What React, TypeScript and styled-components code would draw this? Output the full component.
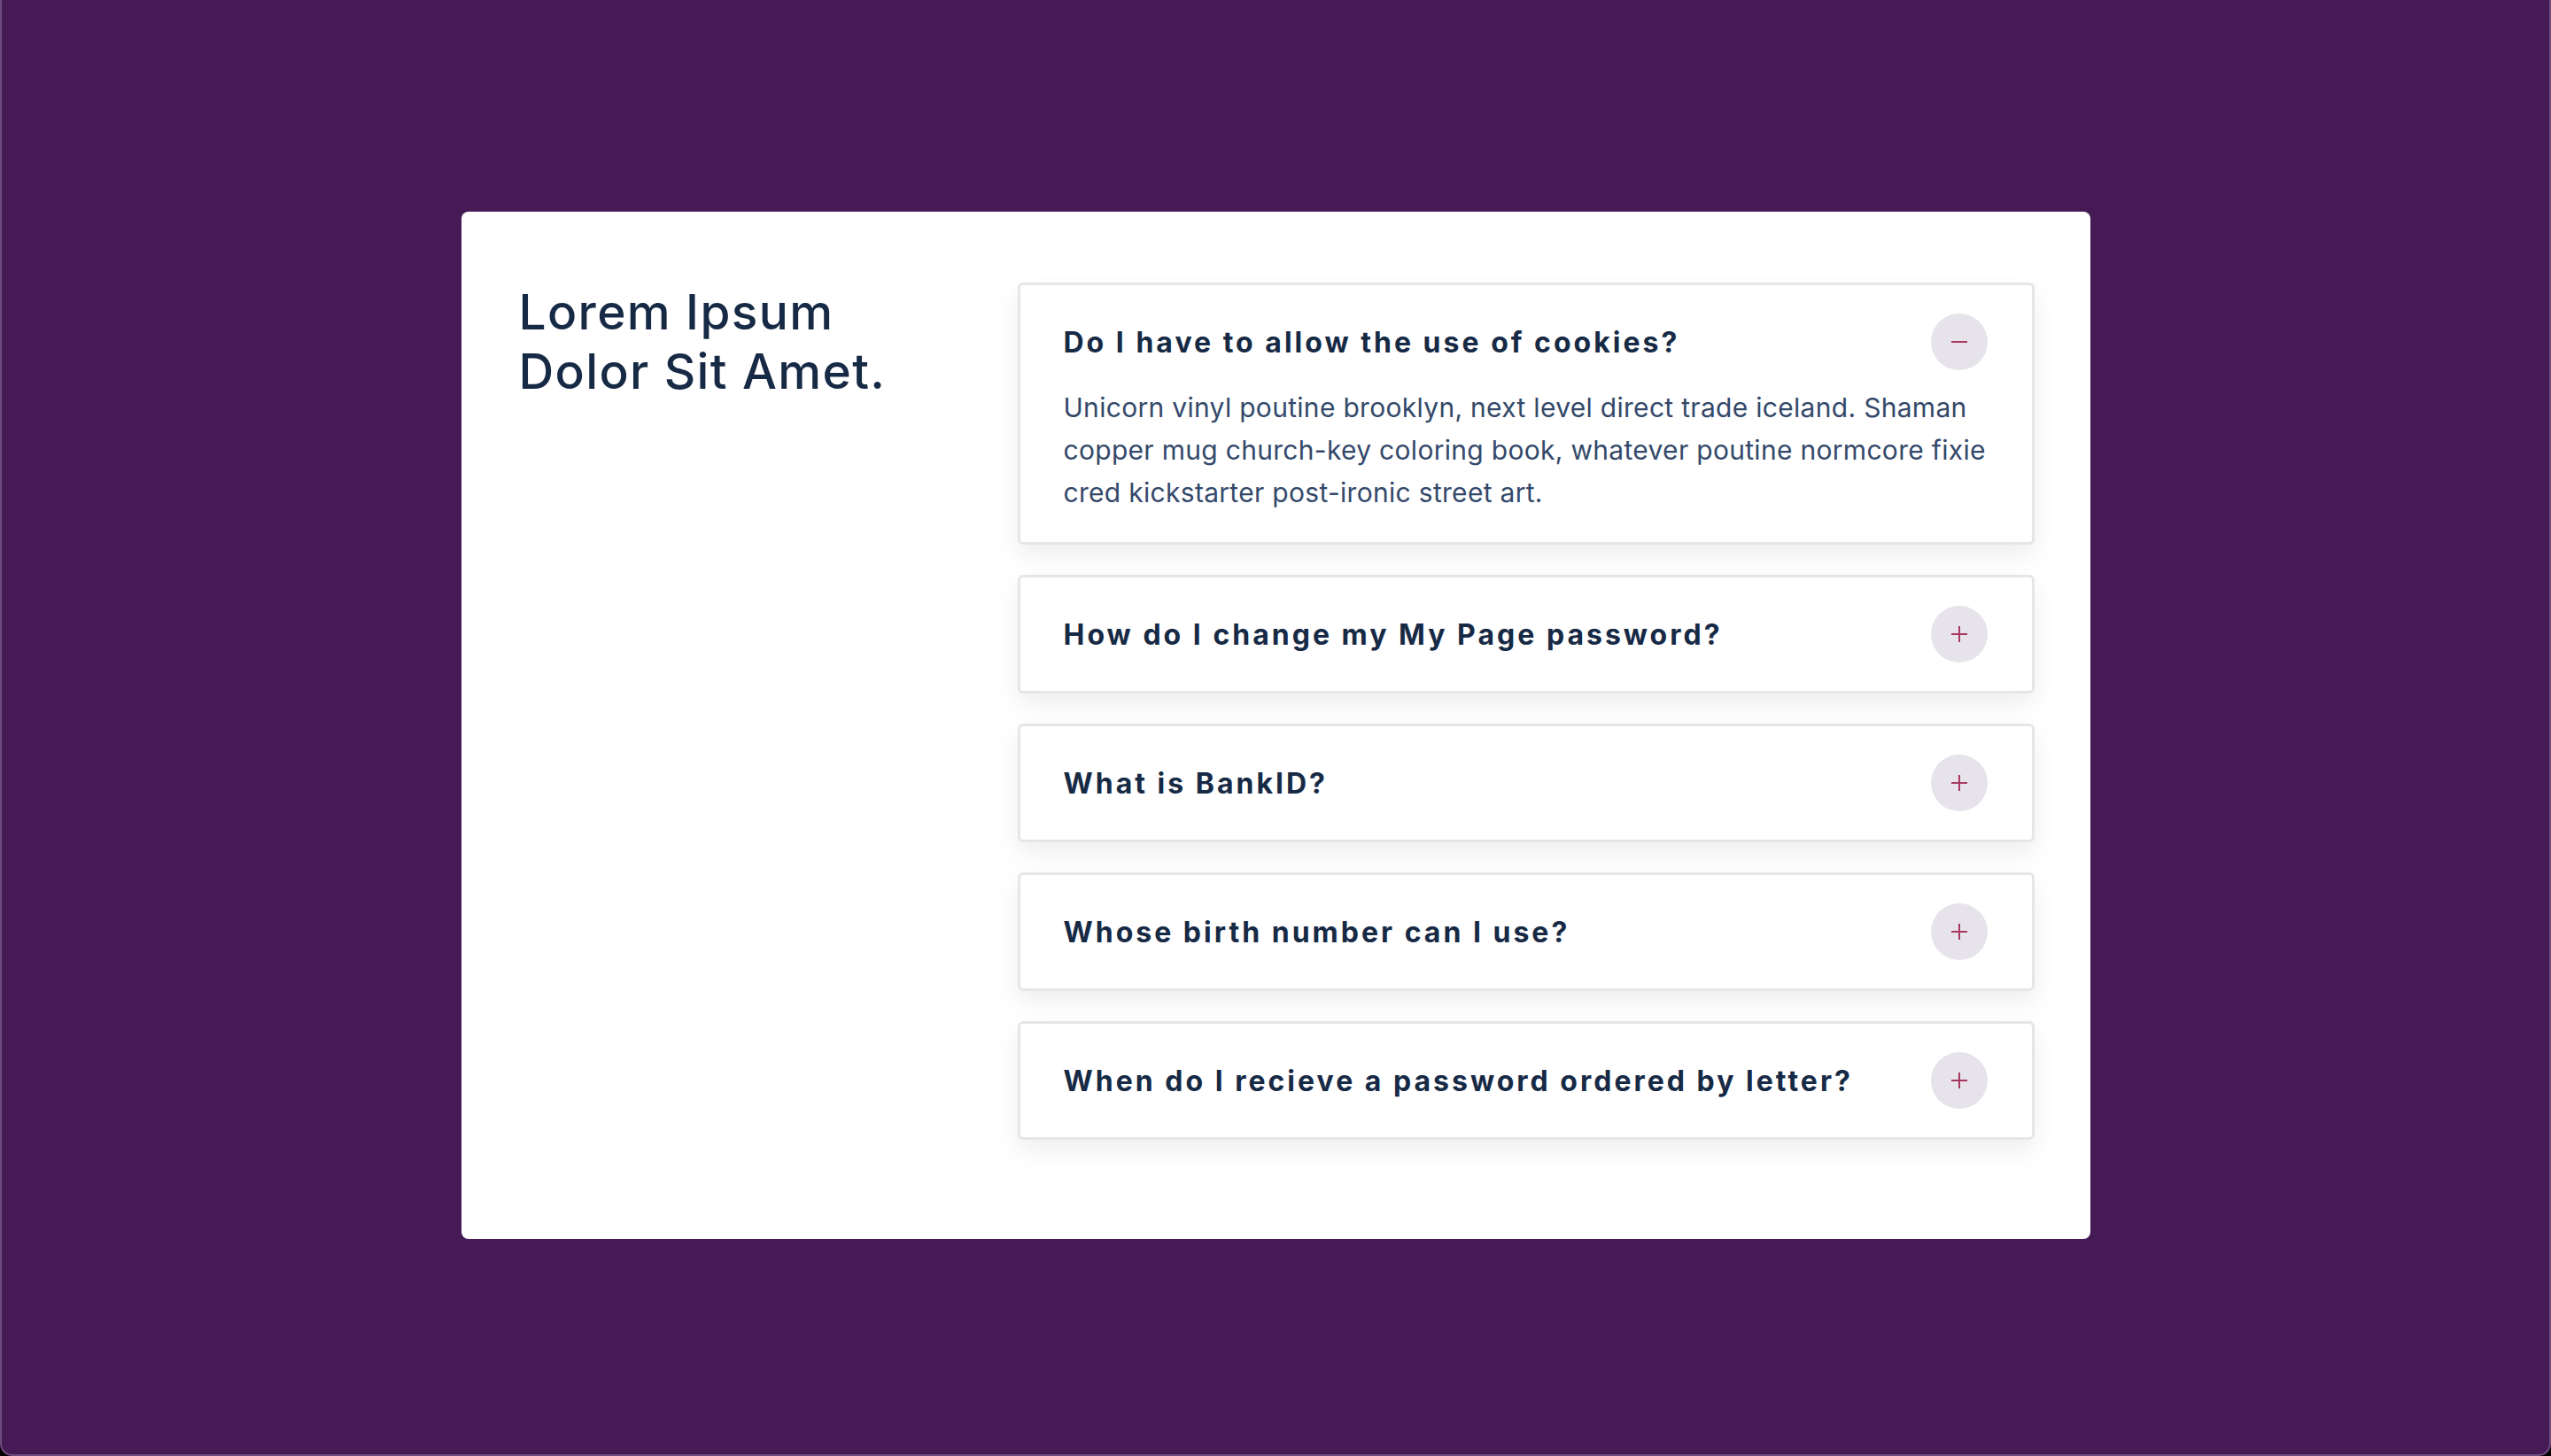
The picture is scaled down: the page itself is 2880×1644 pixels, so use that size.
import React, { useState } from "react";
import styled, { createGlobalStyle } from "styled-components";

const GlobalStyle = createGlobalStyle`
  html, body {
    margin: 0;
    padding: 0;
    background: #000;
  }
  * { box-sizing: border-box; }
  #root { min-height: 100vh; }
`;

const Frame = styled.div`
  height: 1644px;
  width: 2880px;
  background: #461a55;
  border: 2px solid #6e4a7e;
  border-top: none;
  border-radius: 0 0 14px 14px;
  display: flex;
  flex-direction: column;
  align-items: center;
  padding-top: 239px;
  font-family: Inter, "Liberation Sans", sans-serif;
`;

const Card = styled.section`
  width: 1839px;
  height: 1160px;
  background: #ffffff;
  border-radius: 8px;
  padding: 80px 63px 0 65px;
  display: flex;
`;

const Intro = styled.div`
  flex: 1;
`;

const Heading = styled.h1`
  margin: 0;
  font-size: 55px;
  line-height: 67px;
  font-weight: 500;
  letter-spacing: 0.025em;
  color: #172a45;
`;

const List = styled.div`
  width: 1148px;
  display: flex;
  flex-direction: column;
  gap: 34px;
`;

const Item = styled.div`
  border: 3px solid #e6e5ea;
  border-radius: 6px;
  background: #fff;
  padding: 32px 50px 32px 49px;
  box-shadow: 0 12px 28px rgba(20, 10, 30, 0.07);
`;

const QuestionRow = styled.button`
  all: unset;
  display: flex;
  align-items: center;
  justify-content: space-between;
  width: 100%;
  height: 64px;
  cursor: pointer;
`;

const Question = styled.span`
  font-size: 32px;
  font-weight: 700;
  letter-spacing: 0.094em;
  color: #172a45;
`;

const Toggle = styled.span`
  width: 64px;
  height: 64px;
  border-radius: 50%;
  background: #e6e4ea;
  display: flex;
  align-items: center;
  justify-content: center;
  flex-shrink: 0;
`;

const Answer = styled.p`
  margin: 18px 0 0;
  font-size: 30px;
  line-height: 48px;
  letter-spacing: 0.01em;
  color: #34496a;
  font-weight: 400;
`;

const Icon = ({ open }: { open: boolean }) => (
  <svg width="20" height="20" viewBox="0 0 20 20">
    <line x1="1" y1="10" x2="19" y2="10" stroke="#a8385f" strokeWidth="2" />
    {!open && <line x1="10" y1="1" x2="10" y2="19" stroke="#a8385f" strokeWidth="2" />}
  </svg>
);

const faqs = [
  {
    q: "Do I have to allow the use of cookies?",
    a: "Unicorn vinyl poutine brooklyn, next level direct trade iceland. Shaman copper mug church-key coloring book, whatever poutine normcore fixie cred kickstarter post-ironic street art.",
  },
  { q: "How do I change my My Page password?", a: "" },
  { q: "What is BankID?", a: "" },
  { q: "Whose birth number can I use?", a: "" },
  { q: "When do I recieve a password ordered by letter?", a: "" },
];

export default function App() {
  const [open, setOpen] = useState<number>(0);
  return (
    <>
      <GlobalStyle />
      <Frame>
        <Card>
          <Intro>
            <Heading>
              Lorem Ipsum
              <br />
              Dolor Sit Amet.
            </Heading>
          </Intro>
          <List>
            {faqs.map((f, i) => (
              <Item key={f.q}>
                <QuestionRow onClick={() => setOpen(open === i ? -1 : i)}>
                  <Question>{f.q}</Question>
                  <Toggle>
                    <Icon open={open === i} />
                  </Toggle>
                </QuestionRow>
                {open === i && f.a && <Answer>{f.a}</Answer>}
              </Item>
            ))}
          </List>
        </Card>
      </Frame>
    </>
  );
}
